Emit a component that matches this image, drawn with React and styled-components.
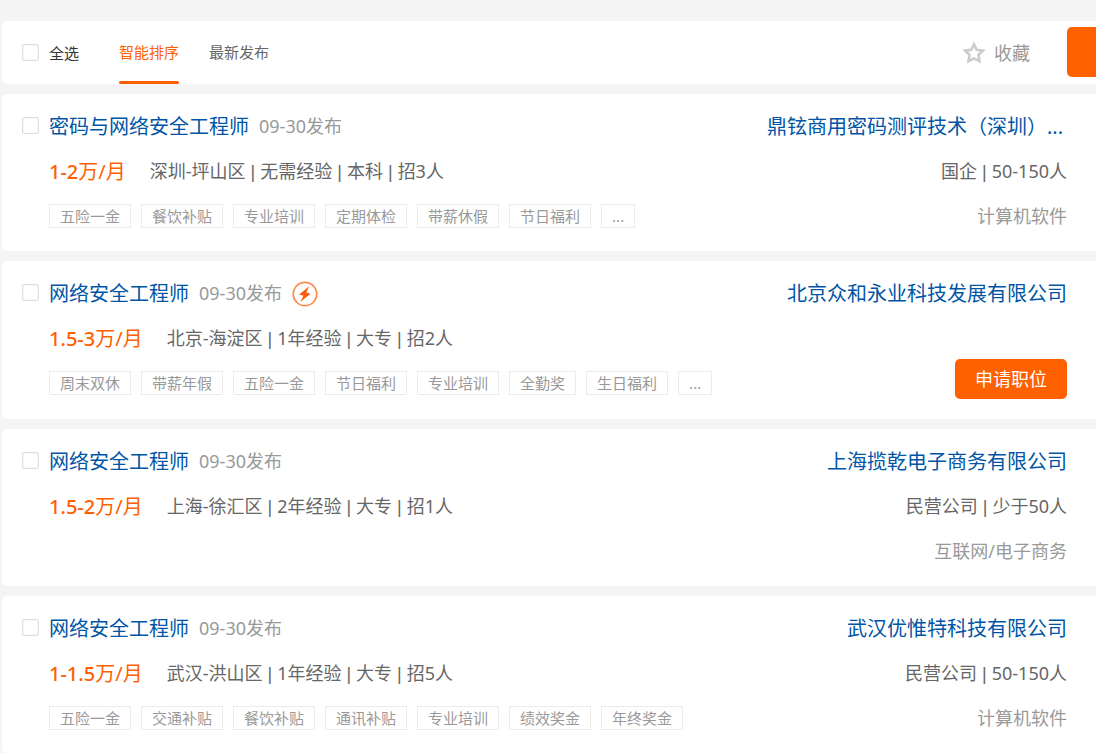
import React, { useState } from 'react'
import styled, { createGlobalStyle, css } from 'styled-components'

const GlobalStyle = createGlobalStyle`
  * {
    box-sizing: border-box;
  }
  body {
    margin: 0;
    background: #f4f4f4;
    color: #666;
    font-family: "Noto Sans", "Noto Sans CJK SC", sans-serif;
    font-size: 18px;
    overflow-x: hidden;
  }
  button {
    border: 0;
    padding: 0;
    background: none;
    font-family: inherit;
    cursor: pointer;
  }
`

const Page = styled.main`
  display: flex;
  flex-direction: column;
  gap: 10px;
  padding: 21px 0 10px 2px;
`

const panel = css`
  background: #fff;
  border-radius: 5px 0 0 5px;
`

const Toolbar = styled.header`
  ${panel}
  display: flex;
  align-items: center;
  height: 63px;
  padding-left: 20px;
`

const CheckLabel = styled.label`
  display: flex;
  align-items: center;
  gap: 10px;
  color: #333;
  font-size: 15px;
  line-height: 20px;
`

const Checkbox = styled.input`
  appearance: none;
  flex: none;
  width: 17px;
  height: 17px;
  margin: 0;
  border: 1px solid #ddd;
  border-radius: 2px;
  background: #fff;
  box-shadow: inset 0 0 2px #e4e4e4;
  cursor: pointer;
  &:checked {
    background: #ff6000;
    border-color: #ff6000;
  }
`

const Tabs = styled.nav`
  display: flex;
  gap: 30px;
  align-self: stretch;
  margin-left: 40px;
`

const Tab = styled.button`
  position: relative;
  padding-bottom: 2px;
  color: ${({ $active }) => ($active ? '#ff6000' : '#666')};
  font-size: 15px;
  line-height: 20px;
  &::after {
    content: "";
    position: absolute;
    left: 0;
    right: 0;
    bottom: 0;
    height: 3px;
    border-radius: 2px;
    background: ${({ $active }) => ($active ? '#ff6000' : 'transparent')};
  }
`

const Favourite = styled.button`
  display: flex;
  align-items: center;
  gap: 8px;
  margin-left: auto;
  color: #999;
  font-size: 18px;
  line-height: 30px;
`

const BatchApply = styled.button`
  align-self: flex-start;
  width: 29px;
  height: 50px;
  margin: 6px 0 0 37px;
  border-radius: 5px 0 0 5px;
  background: #ff6000;
`

const Card = styled.article`
  ${panel}
  display: flex;
  align-items: flex-start;
  gap: 10px;
  padding: 18px 29px 20px 20px;
`

const CheckCell = styled.div`
  display: flex;
  padding-top: 5px;
`

const Job = styled.div`
  flex: 1;
  min-width: 0;
  display: flex;
  flex-direction: column;
  gap: 15px;
`

const Row = styled.div`
  display: flex;
  align-items: flex-start;
  gap: ${({ $gap }) => $gap || 10}px;
  height: 30px;
  line-height: 28px;
  white-space: nowrap;
`

const NameLink = styled.a`
  height: 30px;
  color: #0055a6;
  font-size: 20px;
  line-height: 30px;
  text-decoration: none;
  white-space: nowrap;
  &:hover {
    color: #ff6000;
  }
`

const Muted = styled.span`
  color: #999;
  height: 29px;
  line-height: 28px;
`

const Pay = styled.span`
  color: #ff6000;
  font-size: 20px;
  line-height: 30px;
`

const Num = styled.span`
  font-weight: 500;
`

const Separator = styled.span`
  font-family: "Liberation Sans", sans-serif;
  white-space: pre;
`

const Tags = styled.ul`
  display: flex;
  gap: 10px;
  margin: 0;
  padding: 2px 0 0;
  list-style: none;
`

const Tag = styled.li`
  padding: 0 10px;
  border: 1px solid #ebebeb;
  color: #999;
  font-size: 15px;
  line-height: 22px;
`

const Company = styled.div`
  flex: none;
  display: flex;
  flex-direction: column;
  align-items: flex-end;
  gap: 15px;
`

const CompanyInfo = styled.span`
  height: 30px;
  line-height: 28px;
`

// the cut-off mark takes the place of one full character
const More = styled.span`
  display: inline-block;
  width: 20px;
`

const ApplyButton = styled.button`
  && {
    margin-top: 35px;
    padding: 0 20px;
    border-radius: 5px;
    background: #ff6000;
    color: #fff;
    font-size: 18px;
    line-height: 40px;
  }
`

const StarIcon = () => (
  <svg width="23" height="23" viewBox="0 0 23 23" fill="none" aria-hidden="true">
    <path
      d="M11 3.2l2.7 5.6 6.2.8-4.5 4.3 1.1 6.2-5.5-2.7-5.5 2.7 1.1-6.2-4.5-4.3 6.2-.8z"
      stroke="#ccc"
      strokeWidth="2.6"
    />
  </svg>
)

const FlashIcon = styled(({ className }) => (
  <svg className={className} width="26" height="26" viewBox="0 0 26 26" aria-hidden="true">
    <circle cx="13" cy="13" r="11.7" fill="none" stroke="#ff8748" strokeWidth="1.7" />
    <path d="M17.2 5.2L7.2 13.4l4.2 1.3-3.2 6.4 10.4-8.3-4.4-1.3z" fill="#ff5a0c" />
  </svg>
))`
  align-self: center;
`

const JOBS = [
  {
    id: 1,
    title: '密码与网络安全工程师',
    pay: ['1-2', '万/月'],
    info: ['深圳-坪山区', '无需经验', '本科', '招3人'],
    tags: ['五险一金', '餐饮补贴', '专业培训', '定期体检', '带薪休假', '节日福利', '...'],
    company: '鼎铉商用密码测评技术（深圳）',
    cut: true,
    companyInfo: ['国企', '50-150人'],
    industry: '计算机软件',
  },
  {
    id: 2,
    title: '网络安全工程师',
    flash: true,
    pay: ['1.5-3', '万/月'],
    info: ['北京-海淀区', '1年经验', '大专', '招2人'],
    tags: ['周末双休', '带薪年假', '五险一金', '节日福利', '专业培训', '全勤奖', '生日福利', '...'],
    company: '北京众和永业科技发展有限公司',
    apply: true,
  },
  {
    id: 3,
    title: '网络安全工程师',
    pay: ['1.5-2', '万/月'],
    info: ['上海-徐汇区', '2年经验', '大专', '招1人'],
    tags: [],
    company: '上海揽乾电子商务有限公司',
    companyInfo: ['民营公司', '少于50人'],
    industry: '互联网/电子商务',
  },
  {
    id: 4,
    title: '网络安全工程师',
    pay: ['1-1.5', '万/月'],
    info: ['武汉-洪山区', '1年经验', '大专', '招5人'],
    tags: ['五险一金', '交通补贴', '餐饮补贴', '通讯补贴', '专业培训', '绩效奖金', '年终奖金'],
    company: '武汉优惟特科技有限公司',
    companyInfo: ['民营公司', '50-150人'],
    industry: '计算机软件',
  },
]

const TABS = ['智能排序', '最新发布']

const Parts = ({ items }) =>
  items.map((item, i) => (
    <React.Fragment key={i}>
      {i > 0 && <Separator> | </Separator>}
      {item}
    </React.Fragment>
  ))

const JobCard = ({ job, checked, onToggle }) => (
  <Card>
    <CheckCell>
      <Checkbox type="checkbox" aria-label={job.title} checked={checked} onChange={onToggle} />
    </CheckCell>

    <Job>
      <Row>
        <NameLink href="#">{job.title}</NameLink>
        <Muted>09-30发布</Muted>
        {job.flash && <FlashIcon />}
      </Row>
      <Row $gap={24}>
        <Pay><Num>{job.pay[0]}</Num>{job.pay[1]}</Pay>
        <span><Parts items={job.info} /></span>
      </Row>
      {job.tags.length > 0 &&
        <Tags>
          {job.tags.map((t, i) => <Tag key={i}>{t}</Tag>)}
        </Tags>
      }
    </Job>

    <Company>
      <NameLink href="#">{job.company}{job.cut && <More>...</More>}</NameLink>
      {job.apply
        ? <ApplyButton type="button">申请职位</ApplyButton>
        : <>
            <CompanyInfo><Parts items={job.companyInfo} /></CompanyInfo>
            <Muted>{job.industry}</Muted>
          </>
      }
    </Company>
  </Card>
)

const App = () => {
  const [ activeTab, setActiveTab ] = useState(0)
  const [ selected, setSelected ] = useState([])

  const toggle = (id) =>
    setSelected(selected.includes(id) ? selected.filter(s => s !== id) : [...selected, id])

  const allSelected = selected.length === JOBS.length

  return (
    <>
      <GlobalStyle />
      <Page lang="zh-CN">
        <Toolbar>
          <CheckLabel>
            <Checkbox
              type="checkbox"
              checked={allSelected}
              onChange={() => setSelected(allSelected ? [] : JOBS.map(j => j.id))}
            />
            全选
          </CheckLabel>
          <Tabs>
            {TABS.map((t, i) =>
              <Tab key={t} type="button" $active={i === activeTab} onClick={() => setActiveTab(i)}>{t}</Tab>
            )}
          </Tabs>
          <Favourite type="button"><StarIcon />收藏</Favourite>
          <BatchApply type="button" aria-label="申请职位" />
        </Toolbar>

        {JOBS.map(job =>
          <JobCard
            key={job.id}
            job={job}
            checked={selected.includes(job.id)}
            onToggle={() => toggle(job.id)}
          />
        )}
      </Page>
    </>
  )
}

export default App
